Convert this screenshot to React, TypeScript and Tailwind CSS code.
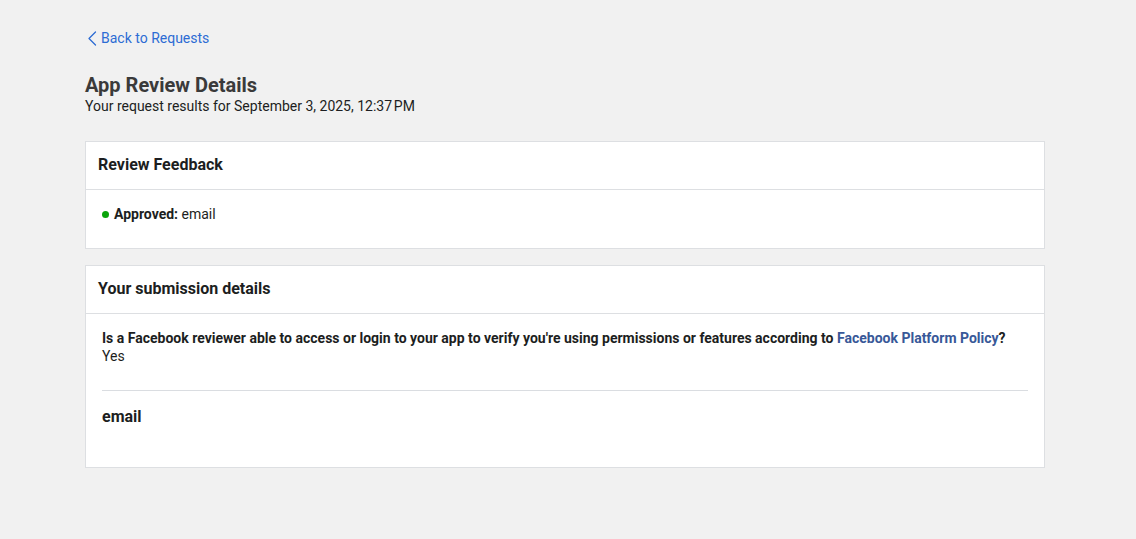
const Card = ({ title, children }: { title: string; children: React.ReactNode }) => (
  <div className="bg-white border border-[#dddfe2]">
    <div className="h-[48px] px-3 pb-[2px] flex items-center border-b border-[#dddfe2]">
      <h2 className="text-[16px] font-bold text-[#1c1e21]">{title}</h2>
    </div>
    {children}
  </div>
);

export default function App() {
  return (
    <div className="min-h-[539px] bg-[#f1f1f1] font-['Roboto',sans-serif] text-[#1c1e21]">
      <div className="w-[960px] ml-[85px] pt-[28px]">
        <a href="#" className="flex items-center gap-[4px] text-[14px] leading-[20px] text-[#2d6cd4] w-fit">
          <svg width="10" height="15" viewBox="0 0 10 15" fill="none" className="ml-[2px]">
            <path d="M8.5 1 L2 7.5 L8.5 14" stroke="currentColor" strokeWidth="1.3" strokeLinecap="round" strokeLinejoin="round" />
          </svg>
          Back to Requests
        </a>
        <h1 className="mt-[25px] text-[20px] leading-[24px] font-bold text-[#3a3a3a]">App Review Details</h1>
        <p className="text-[14px] leading-[18px] text-[#1c1e21]">Your request results for September 3, 2025, 12:37{"\u202F"}PM</p>

        <div className="mt-[26px] flex flex-col gap-4">
          <Card title="Review Feedback">
            <div className="px-4 pt-[14px] pb-[24px] text-[14px] leading-[20px] flex items-center gap-[5px]">
              <span className="w-[7px] h-[7px] rounded-full bg-[#0aa40a]" />
              <span>
                <span className="font-bold">Approved:</span> email
              </span>
            </div>
          </Card>

          <Card title="Your submission details">
            <div className="px-4 pt-[15px] pb-[40px]">
              <p className="text-[14px] leading-[18px] font-bold">
                Is a Facebook reviewer able to access or login to your app to verify you're using permissions or features according to{" "}
                <a href="#" className="text-[#385898]">Facebook Platform Policy</a>?
              </p>
              <p className="text-[14px] leading-[18px]">Yes</p>
              <div className="mt-[25px] border-t border-[#dadde1]" />
              <h3 className="mt-[16px] text-[16px] leading-[20px] font-bold">email</h3>
            </div>
          </Card>
        </div>
      </div>
    </div>
  );
}
